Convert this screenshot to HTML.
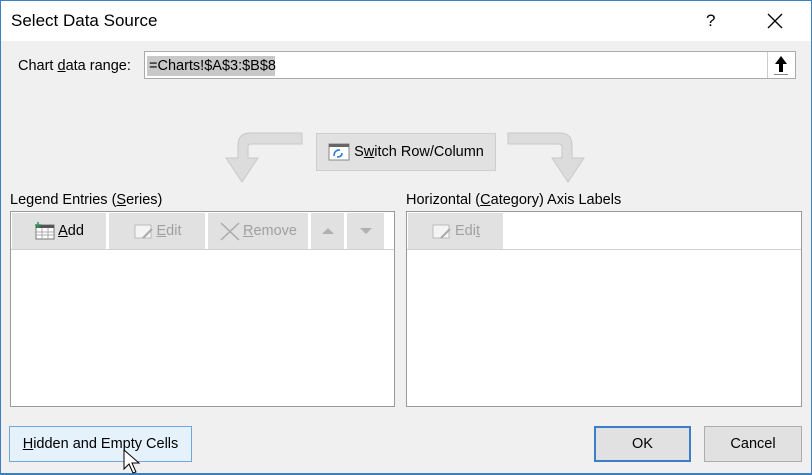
<!DOCTYPE html>
<html><head><style>
*{box-sizing:border-box;margin:0;padding:0}
body{width:812px;height:475px;overflow:hidden;background:#f0f0f0;font-family:"Liberation Sans",sans-serif;font-size:14.5px;color:#000;position:relative}
.a{position:absolute}
.win{left:0;top:0;width:812px;height:475px;border:1px solid #3d7fc1;border-bottom:2px solid #3d7fc1}
.title{left:1px;top:1px;width:810px;height:40px;background:#fff}
.btn{position:absolute;background:#e1e1e1;border:1px solid #adadad;display:flex;align-items:center;justify-content:center;font-size:14.5px}
.tb{position:absolute;top:213px;height:36px;background:#e1e1e1;display:flex;align-items:center;justify-content:center;color:#000;font-size:14.5px}
.dis{color:#a0a0a0}
.panel{position:absolute;background:#fff;border:1px solid #9a9a9a}
u{text-decoration:underline}
</style></head><body>
<div class="a win"></div>
<div class="a title"></div>
<div class="a" style="left:11px;top:11px;font-size:17px">Select Data Source</div>
<div class="a" style="left:706px;top:11px;font-size:17px">?</div>
<svg class="a" style="left:767px;top:13px" width="16" height="16"><path d="M1 1L15 15M15 1L1 15" stroke="#000" stroke-width="1.3"/></svg>
<div class="a" style="left:18px;top:58px">Chart <u>d</u>ata range:</div>
<div class="a" style="left:144px;top:51px;width:652px;height:28px;background:#fff;border:1px solid #aaa"></div>
<div class="a" style="left:147px;top:56px;width:128px;height:20px;background:#c8c8c8"></div>
<div class="a" style="left:149px;top:58px">=Charts!$A$3:$B$8</div>
<div class="a" style="left:767px;top:52px;width:28px;height:26px;border-left:1px solid #ccc;background:#fff"></div>
<svg class="a" style="left:771px;top:54px" width="20" height="22"><path d="M10 2L4 10H8V18H12V10H16Z" fill="#000"/><rect x="3" y="20" width="14" height="1" fill="#888"/></svg>
<svg class="a" style="left:220px;top:130px" width="380" height="56">
<path d="M82 3H30Q18 3 18 16V28H6L22 52L38 28H28V17Q28 14 32 14H82Z" fill="#dcdcdc" stroke="#c8c8c8"/>
<path d="M288 3H340Q352 3 352 16V28H364L348 52L332 28H342V17Q342 14 338 14H288Z" fill="#dcdcdc" stroke="#c8c8c8"/>
</svg>
<div class="btn" style="left:316px;top:133px;width:180px;height:38px;border-color:#cdcdcd"><svg width="22" height="18" style="margin-right:4px"><rect x="1" y="1" width="20" height="16" fill="#fff" stroke="#888"/><rect x="1" y="1" width="20" height="3" fill="#666"/><path d="M6 13Q6 7 12 7M9 7l3 0M14 10q0 4-5 4" stroke="#2a7ad0" fill="none" stroke-width="1.5"/></svg>S<u>w</u>itch Row/Column</div>
<div class="a" style="left:10px;top:192px">Legend Entries (<u>S</u>eries)</div>
<div class="a" style="left:406px;top:192px">Horizontal (<u>C</u>ategory) Axis Labels</div>
<div class="panel" style="left:10px;top:211px;width:385px;height:196px"></div>
<div class="panel" style="left:406px;top:211px;width:396px;height:196px"></div>
<div class="a" style="left:11px;top:249px;width:383px;height:1px;background:#d0d0d0"></div>
<div class="a" style="left:407px;top:249px;width:394px;height:1px;background:#d0d0d0"></div>
<div class="tb" style="left:12px;width:94px"><svg width="22" height="18" style="margin-right:2px"><rect x="2" y="3" width="18" height="14" fill="#fff" stroke="#777"/><rect x="2" y="3" width="18" height="3" fill="#555"/><path d="M2 10H20M2 13H20M8 6V17M14 6V17" stroke="#aaa"/><path d="M4 0V6M1 3H7" stroke="#2a9a5a" stroke-width="1.5"/></svg><u>A</u>dd</div>
<div class="tb dis" style="left:109px;width:96px"><svg width="22" height="18" style="margin-right:2px"><rect x="2" y="3" width="16" height="13" fill="#f4f4f4" stroke="#bbb"/><path d="M10 16L19 7" stroke="#aaa" stroke-width="2"/></svg><u>E</u>dit</div>
<div class="tb dis" style="left:208px;width:100px"><svg width="22" height="20" style="margin-right:2px"><path d="M2 2L20 19M20 2L2 19" stroke="#aaa" stroke-width="1.5"/></svg><u>R</u>emove</div>
<div class="tb" style="left:311px;width:33px"><svg width="12" height="8"><path d="M0 7L6 1L12 7Z" fill="#b0b0b0"/></svg></div>
<div class="tb" style="left:347px;width:37px"><svg width="12" height="8"><path d="M0 1L6 7L12 1Z" fill="#b0b0b0"/></svg></div>
<div class="tb dis" style="left:408px;width:95px"><svg width="22" height="18" style="margin-right:2px"><rect x="2" y="3" width="16" height="13" fill="#f4f4f4" stroke="#bbb"/><path d="M10 16L19 7" stroke="#aaa" stroke-width="2"/></svg>Edi<u>t</u></div>
<div class="btn" style="left:9px;top:426px;width:183px;height:36px;background:#e5f1fb;border-color:#6fa8dc"><u>H</u>idden and Empty Cells</div>
<div class="btn" style="left:594px;top:426px;width:97px;height:36px;border:2px solid #3c7fc8">OK</div>
<div class="btn" style="left:704px;top:426px;width:98px;height:36px">Cancel</div>
<svg class="a" style="left:123px;top:449px" width="20" height="26"><path d="M1 1V20L6 15L10 24L13 23L9 14H16Z" fill="#fff" stroke="#000"/></svg>
</body></html>
